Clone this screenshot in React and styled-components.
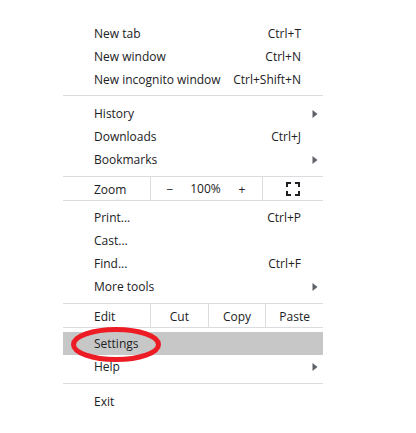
import React from 'react';
import styled, { createGlobalStyle } from 'styled-components';

const GlobalStyle = createGlobalStyle`
  * {
    box-sizing: border-box;
  }
  body {
    margin: 0;
    background-color: #ffffff;
  }
  button {
    margin: 0;
    padding: 0;
    border: 0;
    background: none;
    color: inherit;
    font: inherit;
    cursor: pointer;
  }
`

const Page = styled.main`
  padding: 22px 93px 20px 63px;
`

const Menu = styled.nav`
  font-family: 'Open Sans', 'Noto Sans', sans-serif;
  font-size: 12px;
  line-height: 23px;
  color: #202124;
`

const MenuGroup = styled.div`
  display: flex;
  flex-direction: column;
  padding-top: ${props => props.$top || '0'};
  padding-bottom: ${props => props.$bottom || '0'};
`

const MenuItem = styled.button`
  position: relative;
  display: flex;
  align-items: center;
  justify-content: space-between;
  height: 23px;
  padding-left: 31px;
  padding-right: ${props => props.$submenu ? '5px' : '22px'};
  background-color: ${props => props.$active ? '#c7c7c7' : 'transparent'};
  text-align: left;
  white-space: nowrap;
`

const Separator = styled.hr`
  height: 1px;
  margin: 0;
  border: 0;
  background-color: #dadce0;
`

const Strip = styled.div`
  display: grid;
  grid-template-columns: ${props => props.$columns};
  height: 25px;
  border-top: 1px solid #dadce0;
  border-bottom: 1px solid #dadce0;
`

const StripLabel = styled.span`
  padding-top: 1px;
  padding-left: 31px;
`

const StripButton = styled.button`
  display: flex;
  align-items: center;
  justify-content: center;
  border-left: 1px solid #dadce0;
`

const ZoomControls = styled.div`
  display: grid;
  grid-template-columns: 38px 1fr 40px;
  text-align: center;
  border-left: 1px solid #dadce0;
`

const Marker = styled.svg`
  position: absolute;
  top: -5px;
  left: 8px;
  z-index: 1;
  pointer-events: none;
`

const SubmenuArrow = () => (
  <svg width="6" height="8" viewBox="0 0 6 8" aria-hidden="true">
    <path d="M0.5 0L5.5 4L0.5 8Z" fill="#5f6368" />
  </svg>
)

const FullscreenIcon = () => (
  <svg width="14" height="14" viewBox="0 0 14 14" aria-hidden="true">
    <path
      d="M1 5V1H5M9 1H13V5M13 9V13H9M5 13H1V9"
      fill="none"
      stroke="#202124"
      strokeWidth="2"
    />
  </svg>
)

const Item = ({ label, shortcut, submenu, active, children }) => (
  <MenuItem type="button" $submenu={submenu} $active={active}>
    <span>{label}</span>
    {shortcut && <span>{shortcut}</span>}
    {submenu && <SubmenuArrow />}
    {children}
  </MenuItem>
)

const App = () => {
  return (
    <Page>
      <GlobalStyle />
      <Menu>
        <MenuGroup $bottom="4px">
          <Item label="New tab" shortcut="Ctrl+T" />
          <Item label="New window" shortcut="Ctrl+N" />
          <Item label="New incognito window" shortcut="Ctrl+Shift+N" />
        </MenuGroup>
        <Separator />
        <MenuGroup $top="6px" $bottom="5px">
          <Item label="History" submenu />
          <Item label="Downloads" shortcut="Ctrl+J" />
          <Item label="Bookmarks" submenu />
        </MenuGroup>
        <Strip $columns="87px 1fr 61px">
          <StripLabel>Zoom</StripLabel>
          <ZoomControls>
            <button type="button" aria-label="Zoom out">−</button>
            <span>100%</span>
            <button type="button" aria-label="Zoom in">+</button>
          </ZoomControls>
          <StripButton type="button" aria-label="Full screen">
            <FullscreenIcon />
          </StripButton>
        </Strip>
        <MenuGroup $top="5px" $bottom="5px">
          <Item label="Print..." shortcut="Ctrl+P" />
          <Item label="Cast..." />
          <Item label="Find..." shortcut="Ctrl+F" />
          <Item label="More tools" submenu />
        </MenuGroup>
        <Strip $columns="87px 1fr 1fr 1fr">
          <StripLabel>Edit</StripLabel>
          <StripButton type="button">Cut</StripButton>
          <StripButton type="button">Copy</StripButton>
          <StripButton type="button">Paste</StripButton>
        </Strip>
        <MenuGroup $top="4px" $bottom="5px">
          <Item label="Settings" active>
            <Marker width="90" height="35" viewBox="0 0 90 35" aria-hidden="true">
              <ellipse cx="45" cy="17.5" rx="42.5" ry="15" fill="none" stroke="#ed1c24" strokeWidth="5" />
            </Marker>
          </Item>
          <Item label="Help" submenu />
        </MenuGroup>
        <Separator />
        <MenuGroup $top="6px">
          <Item label="Exit" />
        </MenuGroup>
      </Menu>
    </Page>
  );
}

export default App;
